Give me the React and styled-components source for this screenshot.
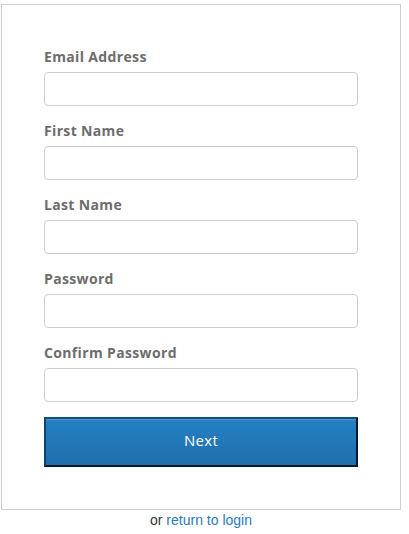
import React from 'react';
import styled, { createGlobalStyle } from 'styled-components';

const GlobalStyle = createGlobalStyle`
  body {
    margin: 0;
    background: #fff;
    font-family: "Liberation Sans", Arial, sans-serif;
  }
  * {
    box-sizing: border-box;
  }
`;

const Page = styled.div`
  width: 400px;
  margin: 4px 0 0 1px;
`;

const Card = styled.form`
  display: flex;
  flex-direction: column;
  border: 1px solid #cfcfcf;
  padding: 42px 42px 42px;
`;

const Field = styled.div`
  display: flex;
  flex-direction: column;
  gap: 5px;
  margin-bottom: 15px;

  &:last-of-type {
    margin-bottom: 11px;
  }
`;

const Label = styled.label`
  font-family: "Open Sans", sans-serif;
  font-weight: 700;
  font-size: 14px;
  line-height: 20px;
  color: #6d6d6d;
  letter-spacing: 0.35px;
`;

const Input = styled.input`
  width: 100%;
  height: 34px;
  border: 1px solid #cccccc;
  border-radius: 4px;
  padding: 6px 10px;
  font-size: 14px;
  outline: none;
`;

const NextButton = styled.button`
  width: 100%;
  height: 50px;
  margin-top: 4px;
  padding: 0 0 4px;
  border: 2px solid;
  border-color: #134c77 #08192a #08192a #0f436b;
  background: linear-gradient(#2580c3, #1f6fad);
  box-shadow: inset 0 1px 0 #4d9bd3;
  color: #fff;
  font-family: "Open Sans", sans-serif;
  font-size: 15px;
  letter-spacing: 0.3px;
  cursor: pointer;
`;

const Footer = styled.p`
  margin: 2px 0 0;
  text-align: center;
  font-size: 14px;
  line-height: 16px;
  color: #333;
`;

const Link = styled.a`
  color: #2a7bbd;
  text-decoration: none;
`;

const fields = [
  { id: 'email', label: 'Email Address', type: 'email' },
  { id: 'first', label: 'First Name', type: 'text' },
  { id: 'last', label: 'Last Name', type: 'text' },
  { id: 'password', label: 'Password', type: 'password' },
  { id: 'confirm', label: 'Confirm Password', type: 'password' },
];

export default function App() {
  return (
    <>
      <GlobalStyle />
      <Page>
        <Card onSubmit={(e) => e.preventDefault()}>
          {fields.map((f) => (
            <Field key={f.id}>
              <Label htmlFor={f.id}>{f.label}</Label>
              <Input id={f.id} type={f.type} />
            </Field>
          ))}
          <NextButton type="submit">Next</NextButton>
        </Card>
        <Footer>
          or <Link href="#">return to login</Link>
        </Footer>
      </Page>
    </>
  );
}
